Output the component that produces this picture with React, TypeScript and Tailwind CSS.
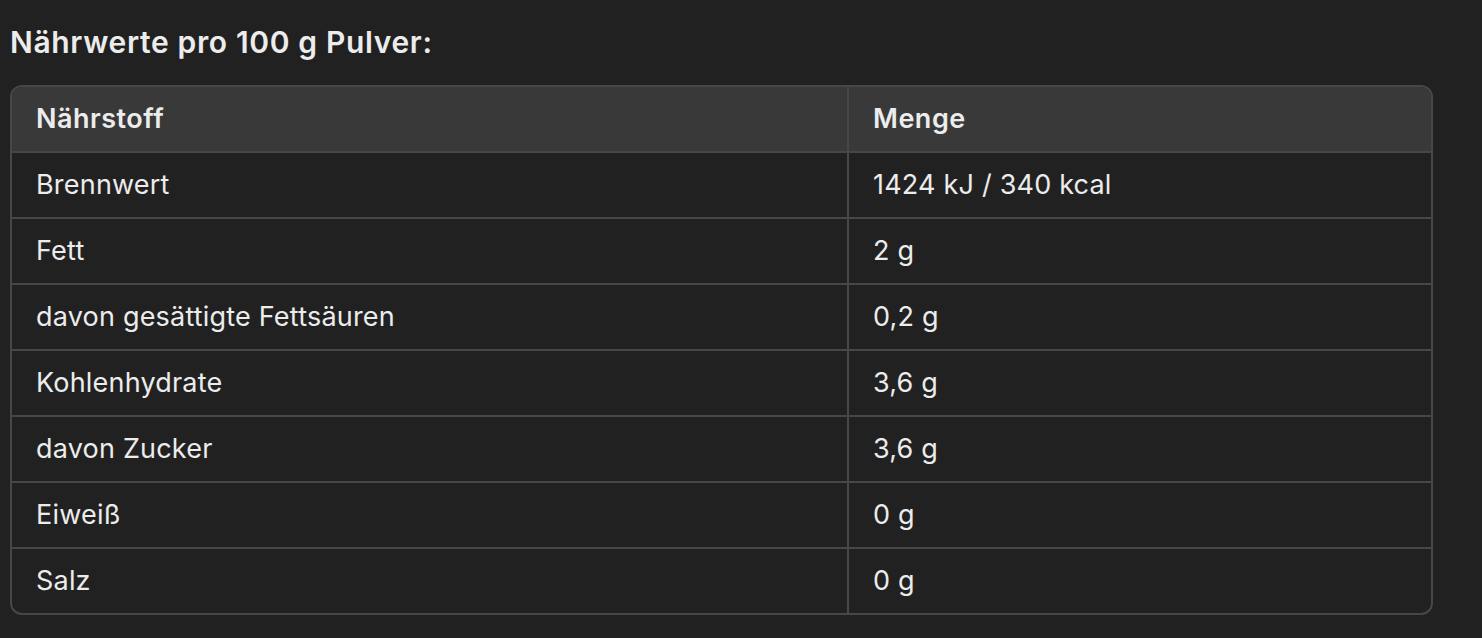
import React from "react";

const rows: [string, string][] = [
  ["Brennwert", "1424 kJ / 340 kcal"],
  ["Fett", "2 g"],
  ["davon gesättigte Fettsäuren", "0,2 g"],
  ["Kohlenhydrate", "3,6 g"],
  ["davon Zucker", "3,6 g"],
  ["Eiweiß", "0 g"],
  ["Salz", "0 g"],
];

export default function App() {
  return (
    <div
      className="w-[1482px] h-[638px] bg-[#212121] text-[#ececec] pl-[10px] pt-[23px]"
      style={{ fontFamily: "Inter, 'Noto Sans', sans-serif" }}
    >
      <h2 className="text-[30px] leading-[38px] font-semibold tracking-[0.65px]">
        Nährwerte pro 100 g Pulver:
      </h2>
      <div className="mt-[24px] w-[1423px] border-[2px] border-[#474747] rounded-[12px] overflow-hidden">
        <div className="grid grid-cols-[837px_1fr] bg-[#393939] h-[64px]">
          <div className="flex items-center pl-[24px] text-[27px] font-semibold tracking-[0.5px] border-r-[2px] border-[#474747]">
            Nährstoff
          </div>
          <div className="flex items-center pl-[24px] text-[27px] font-semibold tracking-[0.5px]">
            Menge
          </div>
        </div>
        {rows.map(([a, b], i) => (
          <div
            key={i}
            className="grid grid-cols-[837px_1fr] h-[66px] border-t-[2px] border-[#474747]"
          >
            <div className="flex items-center pl-[24px] text-[27px] tracking-[0.2px] border-r-[2px] border-[#474747]">
              {a}
            </div>
            <div className="flex items-center pl-[24px] text-[27px] tracking-[0.2px]">{b}</div>
          </div>
        ))}
      </div>
    </div>
  );
}
